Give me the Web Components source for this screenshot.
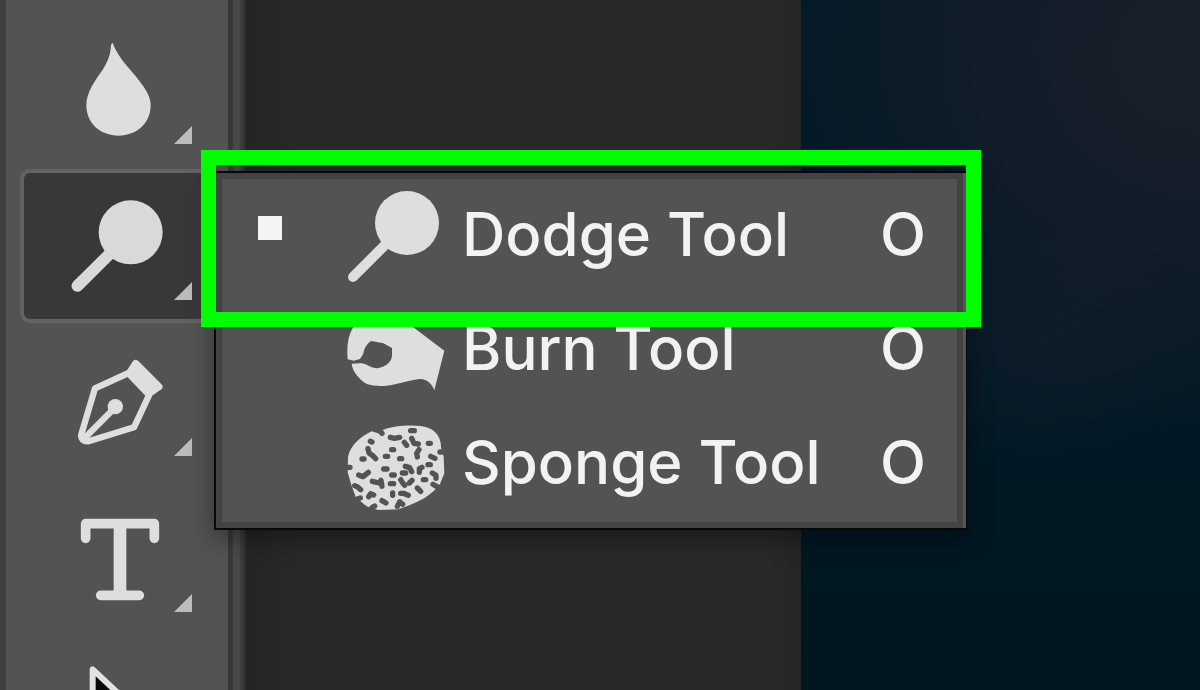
<!DOCTYPE html>
<html lang="en">
<head>
<meta charset="utf-8">
<title>Dodge Tool</title>
<style>
body { margin: 0; background: #282828; font-family: Inter, Roboto, sans-serif; }
</style>
</head>
<body>
<editor-stage>
  <tool-bar slot="tools">
    <tool-button icon="blur" label="Blur Tool"></tool-button>
    <tool-button icon="dodge" label="Dodge Tool" selected></tool-button>
    <tool-button icon="pen" label="Pen Tool"></tool-button>
    <tool-button icon="type" label="Type Tool"></tool-button>
    <tool-button icon="arrow" label="Path Selection Tool"></tool-button>
  </tool-bar>
  <tool-menu slot="overlay">
    <tool-item icon="menu-dodge" key="O" checked>Dodge Tool</tool-item>
    <tool-item icon="burn" key="O">Burn Tool</tool-item>
    <tool-item icon="sponge" key="O">Sponge Tool</tool-item>
  </tool-menu>
  <focus-frame slot="overlay"></focus-frame>
</editor-stage>
<script>
const ICONS = {
  blur: `<g transform="translate(-72 -42) scale(.33333)"><path fill="#dedede" d="M338 128C343 144 356 166 374 190C395 216 417 239 432 262C445 282 452 298 452 316C452 370 410 407 356 407C301 407 259 370 259 316C259 274 287 240 310 206C329 176 332 154 333 136Q335 129 338 128Z"/></g>`,
  dodge: `<g transform="translate(-72 -198) scale(.33333)"><circle cx="392" cy="697" r="96" fill="#d9d9d9"/><path d="M232 858L345 746" stroke="#d9d9d9" stroke-width="35" stroke-linecap="round"/></g>`,
  pen: `<g transform="translate(-72 -14) scale(.33333)" fill="none" stroke="#dedede" stroke-width="19" stroke-linejoin="round"><path d="M386 99L285 145L243 286Q244 305 266 304L402 262L448 164M254 294L340 208"/><path d="M407 70L477 140L446 162L387 101Z" fill="#dedede" stroke-width="21"/><circle cx="346" cy="200" r="23" fill="#dedede" stroke="none"/></g>`,
  type: `<g transform="translate(-72 -170) scale(.33333)" fill="none" stroke="#dedede" stroke-linecap="round" stroke-linejoin="round"><path stroke-width="29" d="M257 595V551H463V595M302 766H418"/><path stroke-width="38" stroke-linecap="butt" d="M360 551V766"/></g>`,
  arrow: `<g transform="translate(-72 -326) scale(.33333)"><path d="M278 988V1240L345 1175L440 1140Z" fill="#080808" stroke="#e2e2e2" stroke-width="18" stroke-linejoin="round"/></g>`,
  "menu-dodge": `<circle cx="59" cy="37" r="32" fill="#dedede"/><path d="M5 91L42 54" stroke="#dedede" stroke-width="10" stroke-linecap="round"/>`,
  burn: `<g transform="translate(-148 20) scale(.33333)"><path fill="#dedede" d="M443 118C440 75 445 45 460 22C480 -30 570 -40 640 22L733 92L703 211C697 195 685 178 660 177C630 180 600 192 560 197Q525 200 500 192C475 175 458 155 455 131L480 130C498 128 505 142 530 145C556 143 576 126 576 106V84L550 70L514 63C500 70 492 88 490 101L480 117L461 122Z"/></g>`,
  sponge: `<g transform="translate(-8 -99) scale(.33333)"><path fill="#dedede" d="M129 345C165 330 235 328 264 338C289 347 304 370 303 397L311 425L313 475L301 505C278 540 235 562 200 574L175 583L115 585L80 574L48 548L34 510L23 472L24 425C32 390 62 365 95 349L119 356Z"/><g fill="none" stroke="#535353" stroke-width="16" stroke-linecap="round" stroke-linejoin="round"><path d="M119 346l7 9M212 347h11M151 367l12 3 16-3M91 379l5 2M193 382l7 9M215 370l7 15 13 2M265 385h6M84 401l3 13 11 8 9 9M155 404h6M66 432h6M136 424h7M179 431h6M237 404l-7 11 2 11M272 424l13 6M300 411h6M22 457h8M56 480l13 5 16-13M131 462h10M196 454l13 4 6 12M187 474h10M238 472v-11l8-4M264 449h7M155 480h8M277 474l11 7v9M44 512l9 4 9 8M97 499l20 5 6-8 3 18M151 506h10M182 494l6 10 6 7M208 504l8-8M250 494h7M86 545l6-9 9 4M158 534v7M182 535h8l15 6M232 519l10 10M279 508l11 6M52 552l9-3M97 577l7-4M126 557l12 7M172 574l7-14 9 8"/></g></g>`
};
const icon = (name, size = 96) => `<svg class="icon" width="${size}" height="${size}" viewBox="0 0 ${size} ${size}" aria-hidden="true">${ICONS[name]}</svg>`;

customElements.define("editor-stage", class extends HTMLElement {
  constructor() {
    super();
    this.attachShadow({ mode: "open" }).innerHTML = `
      <style>
        :host { display: grid; grid-template-columns: 246px 555px 1fr; height: 100vh; position: relative; overflow: hidden; }
        .board { background: linear-gradient(90deg, #252525, #292929 10%, #292929 94%, #252525); }
        .photo { background:
          radial-gradient(ellipse 420px 380px at 100% 8%, #1a202b, rgba(25,30,42,.7) 45%, transparent),
          radial-gradient(ellipse 170px 120px at 60% 50%, rgba(18,29,44,.6), transparent),
          linear-gradient(#041a27, #021925 60%, #001620); }
      </style>
      <slot name="tools"></slot>
      <div class="board"></div>
      <div class="photo"></div>
      <slot name="overlay"></slot>`;
  }
});

customElements.define("tool-bar", class extends HTMLElement {
  constructor() {
    super();
    this.attachShadow({ mode: "open" }).innerHTML = `
      <style>
        :host { display: grid; grid-template-columns: 6px 222px 18px; min-height: 0; }
        .edge { background: #3e3e3e; }
        nav { display: flex; flex-direction: column; gap: 2px; padding: 13px 14px 0; background: #535353; overflow: hidden; }
        .seam { background: linear-gradient(90deg, #383838, #383838 4px, #4a4a4a 6px, #4a4a4a 11px, #3b3b3b 13px, #363636 16px, #292929); }
      </style>
      <div class="edge"></div>
      <nav aria-label="Tools"><slot></slot></nav>
      <div class="seam"></div>`;
  }
});

customElements.define("tool-button", class extends HTMLElement {
  connectedCallback() {
    if (this.shadowRoot) return;
    this.attachShadow({ mode: "open" }).innerHTML = `
      <style>
        :host { display: block; flex: none; }
        button { box-sizing: border-box; display: flex; align-items: flex-start; gap: 6px; width: 100%; height: 154px; margin: 0; padding: 25px 0 0 48px; border: 4px solid transparent; border-radius: 10px; background: none; }
        :host([selected]) button { background: #383838; border-color: #636363; }
        svg { flex: none; overflow: visible; }
        .more { margin-top: 84px; }
      </style>
      <button type="button" aria-label="${this.getAttribute("label")}" aria-pressed="${this.hasAttribute("selected")}">
        ${icon(this.getAttribute("icon"))}
        <svg class="more" width="18" height="18" viewBox="0 0 18 18" aria-hidden="true"><path d="M18 0V18H0Z" fill="#bcbcbc"/></svg>
      </button>`;
  }
});

customElements.define("tool-menu", class extends HTMLElement {
  constructor() {
    super();
    this.attachShadow({ mode: "open" }).innerHTML = `
      <style>
        :host { position: absolute; left: 214px; top: 171px; box-sizing: border-box; width: 753px; display: flex; flex-direction: column; padding: 4px 0 9px; border: 2px solid #080808; border-right-width: 1px; background: #535353;
          box-shadow: inset -3px 0 #555, inset 0 0 0 6px #434343, inset -9px 0 #434343, 0 8px 24px rgba(0,0,0,.4); }
      </style>
      <slot></slot>`;
    this.setAttribute("role", "menu");
  }
});

customElements.define("tool-item", class extends HTMLElement {
  connectedCallback() {
    if (this.shadowRoot) return;
    this.attachShadow({ mode: "open" }).innerHTML = `
      <style>
        :host { display: block; }
        button { box-sizing: border-box; display: grid; grid-template-columns: 24px 96px 1fr auto; align-items: center; width: 100%; height: 114px; margin: 0; padding: 0 40px 0 42px; border: 0; background: none; color: #f2f2f2; font: 500 60px/72px Inter, Roboto, sans-serif; text-align: left; white-space: nowrap; }
        .mark { align-self: start; width: 24px; height: 24px; margin-top: 39px; }
        :host([checked]) .mark { background: #f4f4f4; }
        svg { margin-left: 66px; overflow: visible; }
        .label { margin-left: 84px; }
      </style>
      <button type="button" role="menuitemradio" aria-checked="${this.hasAttribute("checked")}">
        <span class="mark"></span>
        ${icon(this.getAttribute("icon"))}
        <span class="label"><slot></slot></span>
        <span>${this.getAttribute("key")}</span>
      </button>`;
  }
});

customElements.define("focus-frame", class extends HTMLElement {
  constructor() {
    super();
    this.attachShadow({ mode: "open" }).innerHTML = `
      <style>
        :host { position: absolute; left: 201px; top: 150px; box-sizing: border-box; width: 780px; height: 177px; border: 15px solid #0f0; pointer-events: none; }
      </style>`;
  }
});
</script>
</body>
</html>
